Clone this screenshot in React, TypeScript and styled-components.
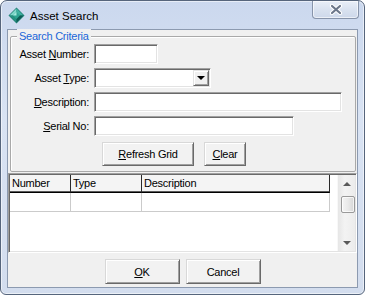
import React from 'react';

import styled, { createGlobalStyle } from 'styled-components';

const GlobalStyle = createGlobalStyle`
    body {
        margin: 0;
        background: #ffffff;
        font-family: 'Liberation Sans', Arial, sans-serif;
    }
`;

const Window = styled.div`
    box-sizing: border-box;
    width: 365px;
    height: 295px;
    display: flex;
    flex-direction: column;
    border: 1px solid #56657c;
    border-radius: 7px 7px 6px 6px;
    background: linear-gradient(180deg, #cbd8ee 0%, #d9e3f3 40%, #d3ddee 100%);
    box-shadow: inset 0 0 0 1px rgba(255, 255, 255, 0.55);
    overflow: hidden;
`;

const TitleBar = styled.div`
    height: 28px;
    flex: none;
    display: flex;
    align-items: center;
    padding-left: 7px;
`;

const Title = styled.span`
    margin-left: 5px;
    font-size: 11.5px;
    color: #000000;
    margin-top: 1px;
`;

const CloseButton = styled.div`
    box-sizing: border-box;
    align-self: flex-start;
    margin-left: auto;
    margin-right: 5px;
    width: 47px;
    height: 18px;
    display: flex;
    align-items: center;
    justify-content: center;
    border: 1px solid #8794aa;
    border-top: none;
    border-radius: 0 0 4px 4px;
    background: linear-gradient(180deg, #e9eff8 0%, #d8e1ef 55%, #cdd8ea 100%);
    box-shadow: inset 0 0 0 1px rgba(255, 255, 255, 0.6);
`;

const Client = styled.div`
    flex: 1;
    margin: 0 6px 6px 6px;
    display: flex;
    flex-direction: column;
    border: 1px solid #8c9ab0;
    background: #f0f0f0;
    font-size: 11px;
    letter-spacing: -0.25px;
    color: #000000;
`;

const GroupBox = styled.div`
    margin: 6px 1px 0 2px;
    padding: 0 0 5px 6px;
    border: 1px solid #a9a9a9;
    border-radius: 2px;
    box-shadow: inset 1px 1px #ffffff;
`;

const Legend = styled.div`
    margin: -8px 0 0 0;
    padding: 0 2px;
    width: fit-content;
    height: 14px;
    line-height: 14px;
    background: #f0f0f0;
    color: #1a66d8;
`;

const Form = styled.div`
    margin-top: 1px;
    display: grid;
    grid-template-columns: 72px auto;
    column-gap: 5px;
    row-gap: 4px;
    align-items: center;
    justify-items: start;
`;

const Label = styled.label`
    justify-self: end;
    white-space: nowrap;
`;

const Field = styled.div<{ $width: number }>`
    box-sizing: border-box;
    position: relative;
    width: ${p => p.$width}px;
    height: 20px;
    background: #ffffff;
    border: 1px solid;
    border-color: #a0a0a0 #ffffff #ffffff #a0a0a0;
    box-shadow: inset 1px 1px #696969, inset -1px -1px #e3e3e3;
    display: flex;
    justify-content: flex-end;
    padding: 1px;
`;

const DropButton = styled.div`
    box-sizing: border-box;
    width: 16px;
    height: 16px;
    display: flex;
    align-items: center;
    justify-content: center;
    background: #f0f0f0;
    border: 1px solid;
    border-color: #e3e3e3 #696969 #696969 #e3e3e3;
    box-shadow: inset 1px 1px #ffffff, inset -1px -1px #a0a0a0;
`;

const Arrow = styled.span<{ $up?: boolean; $color?: string }>`
    width: 0;
    height: 0;
    border-left: 4px solid transparent;
    border-right: 4px solid transparent;
    ${p =>
        p.$up
            ? `border-bottom: 4px solid ${p.$color ?? '#000'};`
            : `border-top: 4px solid ${p.$color ?? '#000'};`}
`;

const ButtonRow = styled.div<{ $center?: boolean }>`
    display: flex;
    gap: ${p => (p.$center ? 6 : 10)}px;
    justify-content: ${p => (p.$center ? 'center' : 'flex-start')};
    margin: ${p => (p.$center ? '6px 0 0 0' : '6px 0 0 85px')};
`;

const Button = styled.button<{ $width: number; $height?: number }>`
    box-sizing: border-box;
    width: ${p => p.$width}px;
    height: ${p => p.$height ?? 24}px;
    padding: 0;
    font-family: 'Liberation Sans', Arial, sans-serif;
    font-size: 11px;
    letter-spacing: -0.25px;
    color: #000000;
    background: #f2f2f2;
    border: 1px solid;
    border-color: #d8d8d8 #696969 #696969 #d8d8d8;
    box-shadow: inset 1px 1px #ffffff, inset -1px -1px #a0a0a0;
`;

const GridBox = styled.div`
    box-sizing: border-box;
    height: 80px;
    margin-top: 1px;
    display: flex;
    padding: 1px;
    background: #ffffff;
    border: 1px solid;
    border-color: #a0a0a0 #ffffff #ffffff #a0a0a0;
    box-shadow: inset 1px 1px #696969, inset -1px -1px #e3e3e3;
`;

const Table = styled.div`
    flex: 1;
    display: flex;
    flex-direction: column;
`;

const Row = styled.div`
    display: flex;
`;

const HeaderCell = styled.div<{ $width: number }>`
    box-sizing: border-box;
    width: ${p => p.$width}px;
    height: 18px;
    padding-left: 2px;
    line-height: 16px;
    background: #f4f4f4;
    border-right: 1px solid #2a2a2a;
    border-bottom: 1px solid #000000;
    box-shadow: inset 0 -1px #5a5a5a;
`;

const Cell = styled.div<{ $width: number }>`
    box-sizing: border-box;
    width: ${p => p.$width}px;
    height: 19px;
    border-right: 1px solid #cbcbcb;
    border-bottom: 1px solid #cbcbcb;
`;

const ScrollBar = styled.div`
    width: 17px;
    display: flex;
    flex-direction: column;
    align-items: center;
    background: linear-gradient(90deg, #e6e6e6 0%, #f3f3f3 40%, #ececec 100%);
    border-left: 1px solid #f8f8f8;
`;

const ScrollButton = styled.div`
    height: 17px;
    display: flex;
    align-items: center;
    justify-content: center;
`;

const Thumb = styled.div`
    box-sizing: border-box;
    margin: 4px 0 0 2px;
    width: 14px;
    height: 17px;
    border: 1px solid #999999;
    border-radius: 2px;
    background: linear-gradient(90deg, #f4f4f4 0%, #e9e9e9 50%, #d6d6d6 100%);
    box-shadow: inset 0 0 0 1px rgba(255, 255, 255, 0.7);
`;

const Spacer = styled.div`
    flex: 1;
`;

const DiamondIcon = () => (
    <svg width="17" height="17" viewBox="0 0 17 17">
        <polygon points="8.5,0.5 16.5,8.5 8.5,16.5 0.5,8.5" fill="#1f7f74" />
        <polygon points="8.5,1.5 8.5,8.5 1.5,8.5" fill="#7fd8c9" />
        <polygon points="8.5,1.5 15.5,8.5 8.5,8.5" fill="#3fb0a0" />
        <polygon points="1.5,8.5 8.5,8.5 8.5,15.5" fill="#24927f" />
        <polygon points="15.5,8.5 8.5,15.5 8.5,8.5" fill="#0e5c54" />
        <polygon points="8.5,5 12,8.5 8.5,12 5,8.5" fill="#2fa391" />
        <polygon points="8.5,5 8.5,8.5 5,8.5" fill="#a8eadf" />
    </svg>
);

const CloseGlyph = () => (
    <svg width="14" height="11" viewBox="0 0 14 11">
        <path d="M3 2 L11 9 M11 2 L3 9" stroke="#ffffff" strokeWidth="4.2" strokeLinecap="round" />
        <path d="M3 2 L11 9 M11 2 L3 9" stroke="#6c778a" strokeWidth="2.2" strokeLinecap="round" />
    </svg>
);

const kolonner = [
    { label: 'Number', width: 61 },
    { label: 'Type', width: 71 },
    { label: 'Description', width: 188 },
];

const App: React.FunctionComponent = () => {
    return (
        <>
            <GlobalStyle />
            <Window>
                <TitleBar>
                    <DiamondIcon />
                    <Title>Asset Search</Title>
                    <CloseButton>
                        <CloseGlyph />
                    </CloseButton>
                </TitleBar>
                <Client>
                    <GroupBox>
                        <Legend>Search Criteria</Legend>
                        <Form>
                            <Label>
                                Asset <u>N</u>umber:
                            </Label>
                            <Field $width={64} />
                            <Label>
                                Asset <u>T</u>ype:
                            </Label>
                            <Field $width={117}>
                                <DropButton>
                                    <Arrow />
                                </DropButton>
                            </Field>
                            <Label>
                                <u>D</u>escription:
                            </Label>
                            <Field $width={248} />
                            <Label>
                                <u>S</u>erial No:
                            </Label>
                            <Field $width={200} />
                        </Form>
                        <ButtonRow>
                            <Button $width={92}>
                                <u>R</u>efresh Grid
                            </Button>
                            <Button $width={42}>
                                <u>C</u>lear
                            </Button>
                        </ButtonRow>
                    </GroupBox>
                    <GridBox>
                        <Table>
                            <Row>
                                {kolonner.map(k => (
                                    <HeaderCell key={k.label} $width={k.width}>
                                        {k.label}
                                    </HeaderCell>
                                ))}
                            </Row>
                            <Row>
                                {kolonner.map(k => (
                                    <Cell key={k.label} $width={k.width} />
                                ))}
                            </Row>
                        </Table>
                        <ScrollBar>
                            <ScrollButton>
                                <Arrow $up $color="#5a5a5a" />
                            </ScrollButton>
                            <Thumb />
                            <Spacer />
                            <ScrollButton>
                                <Arrow $color="#5a5a5a" />
                            </ScrollButton>
                        </ScrollBar>
                    </GridBox>
                    <ButtonRow $center>
                        <Button $width={75} $height={25}>
                            <u>O</u>K
                        </Button>
                        <Button $width={75} $height={25}>
                            Cancel
                        </Button>
                    </ButtonRow>
                </Client>
            </Window>
        </>
    );
};

export default App;
